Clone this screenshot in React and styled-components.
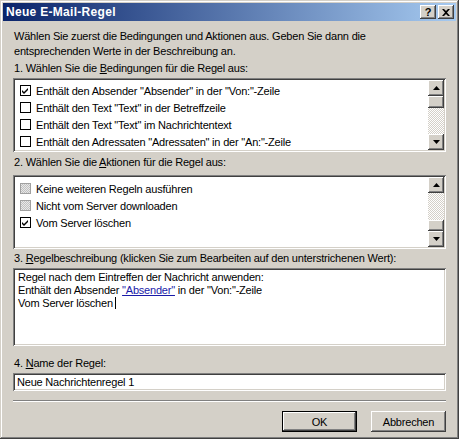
import React from 'react';
import styled, { createGlobalStyle } from 'styled-components';

const GlobalStyle = createGlobalStyle`
  html, body {
    margin: 0;
    padding: 0;
    background: #d4d0c8;
  }
  * {
    box-sizing: border-box;
  }
`;

// Win2000 look
const raised = `
  box-shadow: inset -1px -1px #404040, inset 1px 1px #ffffff,
    inset -2px -2px #808080, inset 2px 2px #d4d0c8;
`;
const sunken = `
  box-shadow: inset 1px 1px #808080, inset -1px -1px #ffffff,
    inset 2px 2px #404040, inset -2px -2px #d4d0c8;
`;

const Window = styled.div`
  width: 459px;
  height: 439px;
  padding: 3px;
  background: #d4d0c8;
  box-shadow: inset -1px -1px #404040, inset 1px 1px #d4d0c8,
    inset -2px -2px #808080, inset 2px 2px #ffffff;
  font-family: 'Liberation Sans', Arial, sans-serif;
  font-size: 11px;
  letter-spacing: -0.2px;
  color: #000;
  display: flex;
  flex-direction: column;
`;

const TitleBar = styled.div`
  height: 18px;
  display: flex;
  align-items: center;
  justify-content: space-between;
  padding: 0 2px 0 3px;
  background: linear-gradient(to right, #0a246a, #a6caf0);
`;

const Title = styled.span`
  color: #fff;
  font-weight: bold;
  font-size: 12px;
  letter-spacing: 0.3px;
`;

const TitleButtons = styled.div`
  display: flex;
  gap: 2px;
`;

const CaptionButton = styled.div`
  width: 16px;
  height: 14px;
  background: #d4d0c8;
  ${raised}
  display: flex;
  align-items: center;
  justify-content: center;
  font-weight: bold;
  font-size: 11px;
  letter-spacing: 0;
  line-height: 1;
`;

const Body = styled.div`
  flex: 1;
  display: flex;
  flex-direction: column;
  padding: 0 10px;
`;

const Intro = styled.p`
  margin: 8px 0 0 1px;
  line-height: 15px;
`;

const Label = styled.div`
  margin: ${(p) => p.$mt || 0}px 0 0 1px;
  line-height: 13px;
  height: 13px;
`;

const Key = styled.span`
  text-decoration: underline;
`;

const ListBox = styled.div`
  margin-top: ${(p) => p.$mt || 0}px;
  height: 74px;
  background: #fff;
  ${sunken}
  padding: 2px;
  display: flex;
`;

const ListItems = styled.div`
  flex: 1;
  overflow: hidden;
  padding-top: ${(p) => p.$pt || 0}px;
`;

const Item = styled.div`
  height: 17px;
  display: flex;
  align-items: center;
  padding-left: 5px;
  gap: 5px;
  white-space: nowrap;
`;

const Check = styled.div`
  width: 11px;
  height: 11px;
  flex: none;
  border: 1px solid #000;
  background: ${(p) =>
    p.$disabled
      ? 'repeating-conic-gradient(#c0c0c0 0 25%, #e8e8e8 0 50%) 0 0 / 2px 2px'
      : '#fff'};
  border-color: ${(p) => (p.$disabled ? '#a0a0a0' : '#000')};
  display: flex;
  align-items: center;
  justify-content: center;
`;

const ScrollBar = styled.div`
  width: 16px;
  flex: none;
  display: flex;
  flex-direction: column;
  background: repeating-conic-gradient(#d4d0c8 0 25%, #ffffff 0 50%) 0 0 / 2px 2px;
`;

const ScrollButton = styled.div`
  width: 16px;
  height: ${(p) => p.$h || 16}px;
  flex: none;
  background: #d4d0c8;
  ${raised}
  display: flex;
  align-items: center;
  justify-content: center;
`;

const Track = styled.div`
  flex: 1;
`;

const TextArea = styled.div`
  margin-top: 3px;
  height: 78px;
  background: #fff;
  ${sunken}
  padding: 3px 5px;
  line-height: 13px;
`;

const Link = styled.span`
  color: #1a1aa8;
  text-decoration: underline;
`;

const Caret = styled.span`
  display: inline-block;
  width: 1px;
  height: 12px;
  margin-left: 2px;
  background: #000;
  vertical-align: -2px;
`;

const Input = styled.div`
  margin-top: 3px;
  height: 18px;
  background: #fff;
  ${sunken}
  padding: 0 4px;
  display: flex;
  align-items: center;
`;

const Separator = styled.div`
  margin-top: 9px;
  height: 2px;
  border-top: 1px solid #808080;
  border-bottom: 1px solid #ffffff;
`;

const Footer = styled.div`
  margin-top: 9px;
  display: flex;
  justify-content: flex-end;
  gap: 14px;
`;

const Button = styled.div`
  width: 75px;
  height: 21px;
  background: #d4d0c8;
  ${(p) =>
    p.$default
      ? `box-shadow: inset 1px 1px #000, inset -1px -1px #000,
          inset -2px -2px #404040, inset 2px 2px #ffffff,
          inset -3px -3px #808080;`
      : raised}
  display: flex;
  align-items: center;
  justify-content: center;
`;

const Arrow = ({ down }) => (
  <svg width="7" height="4" viewBox="0 0 7 4">
    <path d={down ? 'M0 0h7L3.5 4z' : 'M3.5 0L7 4H0z'} fill="#000" />
  </svg>
);

const Tick = () => (
  <svg width="9" height="9" viewBox="0 0 9 9">
    <path d="M1 4l2 2 4-4v2l-4 4-2-2z" fill="#000" />
  </svg>
);

const Scroll = ({ thumbTop }) => (
  <ScrollBar>
    <ScrollButton><Arrow /></ScrollButton>
    {thumbTop ? (
      <>
        <ScrollButton $h={12} />
        <Track />
      </>
    ) : (
      <>
        <Track />
        <ScrollButton $h={11} />
      </>
    )}
    <ScrollButton><Arrow down /></ScrollButton>
  </ScrollBar>
);

const conditions = [
  { text: 'Enthält den Absender "Absender" in der "Von:"-Zeile', checked: true },
  { text: 'Enthält den Text "Text" in der Betreffzeile' },
  { text: 'Enthält den Text "Text" im Nachrichtentext' },
  { text: 'Enthält den Adressaten "Adressaten" in der "An:"-Zeile' },
];

const actions = [
  { text: 'Keine weiteren Regeln ausführen', disabled: true },
  { text: 'Nicht vom Server downloaden', disabled: true },
  { text: 'Vom Server löschen', checked: true },
];

const App = () => (
  <>
    <GlobalStyle />
    <Window>
      <TitleBar>
        <Title>Neue E-Mail-Regel</Title>
        <TitleButtons>
          <CaptionButton>?</CaptionButton>
          <CaptionButton>
            <svg width="8" height="7" viewBox="0 0 8 7">
              <path d="M0 0h2l2 2 2-2h2L5 3.5 8 7H6L4 5 2 7H0l3-3.5z" fill="#000" />
            </svg>
          </CaptionButton>
        </TitleButtons>
      </TitleBar>

      <Body>
        <Intro>
          Wählen Sie zuerst die Bedingungen und Aktionen aus. Geben Sie dann die
          <br />
          entsprechenden Werte in der Beschreibung an.
        </Intro>

        <Label $mt={3}>1. Wählen Sie die <Key>B</Key>edingungen für die Regel aus:</Label>
        <ListBox $mt={3}>
          <ListItems $pt={2}>
            {conditions.map((c) => (
              <Item key={c.text}>
                <Check>{c.checked && <Tick />}</Check>
                {c.text}
              </Item>
            ))}
          </ListItems>
          <Scroll thumbTop />
        </ListBox>

        <Label $mt={4}>2. Wählen Sie die <Key>A</Key>ktionen für die Regel aus:</Label>
        <ListBox $mt={6}>
          <ListItems $pt={3}>
            {actions.map((a) => (
              <Item key={a.text}>
                <Check $disabled={a.disabled}>{a.checked && <Tick />}</Check>
                {a.text}
              </Item>
            ))}
          </ListItems>
          <Scroll />
        </ListBox>

        <Label $mt={3}>
          3. <Key>R</Key>egelbeschreibung (klicken Sie zum Bearbeiten auf den unterstrichenen Wert):
        </Label>
        <TextArea>
          Regel nach dem Eintreffen der Nachricht anwenden:
          <br />
          Enthält den Absender <Link>"Absender"</Link> in der "Von:"-Zeile
          <br />
          Vom Server löschen<Caret />
        </TextArea>

        <Label $mt={11}>4. <Key>N</Key>ame der Regel:</Label>
        <Input>Neue Nachrichtenregel 1</Input>

        <Separator />

        <Footer>
          <Button $default>OK</Button>
          <Button>Abbrechen</Button>
        </Footer>
      </Body>
    </Window>
  </>
);

export default App;
